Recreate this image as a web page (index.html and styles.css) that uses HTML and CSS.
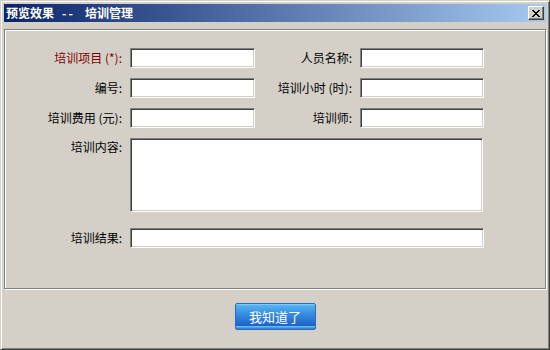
FILE: index.html
```html
<!DOCTYPE html>
<html lang="zh-CN">
<head>
    <meta charset="UTF-8" />
    <title>预览效果 -- 培训管理</title>
    <link rel="stylesheet" href="styles.css">
</head>
<body>

<!-- 弹出窗口 -->
<div class="window">
    <div class="titlebar">
        <span class="title">预览效果<span class="sep">--</span>培训管理</span>
        <span class="close-btn">
            <svg width="8" height="7" viewBox="0 0 8 7" shape-rendering="crispEdges">
                <path d="M0 0h2v1h-2zM6 0h2v1h-2zM1 1h2v1h-2zM5 1h2v1h-2zM2 2h4v1h-4zM3 3h2v1h-2zM2 4h4v1h-4zM1 5h2v1h-2zM5 5h2v1h-2zM0 6h2v1h-2zM6 6h2v1h-2z" fill="#000"/>
            </svg>
        </span>
    </div>

    <!-- 表单区域 -->
    <div class="panel">
        <div class="form">
            <label class="lbl req">培训项目 (*):</label>
            <input type="text" class="field" />
            <label class="lbl">人员名称:</label>
            <input type="text" class="field" />

            <label class="lbl">编号:</label>
            <input type="text" class="field" />
            <label class="lbl">培训小时 (时):</label>
            <input type="text" class="field" />

            <label class="lbl">培训费用 (元):</label>
            <input type="text" class="field" />
            <label class="lbl">培训师:</label>
            <input type="text" class="field" />

            <label class="lbl top">培训内容:</label>
            <textarea class="field wide area"></textarea>

            <label class="lbl result-lbl">培训结果:</label>
            <input type="text" class="field wide result" />
        </div>
    </div>

    <div class="footer">
        <button class="ok-btn">我知道了</button>
    </div>
</div>

</body>
</html>
```

FILE: styles.css
```css
body {
    margin: 0;
    font-family: "Noto Sans CJK SC", "Liberation Sans", sans-serif;
    font-size: 12px;
    background: #d4d0c8;
}
.window {
    width: 550px;
    height: 350px;
    box-sizing: border-box;
    padding: 3px;
    background: #d4d0c8;
    border: 1px solid;
    border-color: #d4d0c8 #404040 #404040 #d4d0c8;
    box-shadow: inset 1px 1px 0 #fff, inset -1px -1px 0 #808080;
}
.titlebar {
    height: 18px;
    display: flex;
    align-items: center;
    justify-content: space-between;
    padding: 0 2px 0 2px;
    margin-bottom: 7px;
    background: linear-gradient(to right, #0a246a, #a6caf0);
}
.title {
    color: #fff;
    font-weight: bold;
    font-size: 12px;
    line-height: 18px;
}
.sep {
    display: inline-block;
    margin: 0 10px 0 8px;
    letter-spacing: 2px;
}
.close-btn {
    width: 16px;
    height: 14px;
    box-sizing: border-box;
    display: flex;
    align-items: center;
    justify-content: center;
    background: #d4d0c8;
    border: 1px solid;
    border-color: #fff #404040 #404040 #fff;
    box-shadow: inset -1px -1px 0 #808080;
}
.panel {
    height: 260px;
    box-sizing: border-box;
    border: 1px solid #808080;
    box-shadow: 1px 1px 0 #fff, inset 1px 1px 0 #fff;
    padding: 18px 0 0 11px;
}
.form {
    display: grid;
    grid-template-columns: 106px 125px 89px 124px;
    column-gap: 8px;
    row-gap: 10px;
}
.lbl {
    align-self: center;
    text-align: right;
    line-height: 16px;
    color: #000;
    white-space: nowrap;
}
.lbl.req {
    color: #800000;
}
.lbl.top {
    align-self: start;
    padding-top: 1px;
}
.field {
    height: 20px;
    box-sizing: border-box;
    margin: 0;
    padding: 2px 3px;
    background: #fff;
    border: 1px solid;
    border-color: #808080 #fff #fff #808080;
    box-shadow: inset 1px 1px 0 #404040, inset -1px -1px 0 #d4d0c8;
    font-family: inherit;
    font-size: 12px;
    outline: none;
}
.wide {
    grid-column: 2 / 5;
}
.area {
    height: 74px;
    resize: none;
    width: 353px;
}
.result-lbl, .result {
    margin-top: 6px;
}
.footer {
    display: flex;
    justify-content: center;
    padding-top: 14px;
}
.ok-btn {
    width: 81px;
    height: 27px;
    padding: 0;
    border: 1px solid #2a6cc0;
    border-radius: 2px;
    color: #fff;
    font-family: inherit;
    font-size: 13px;
    background: linear-gradient(#5cb8f2 0%, #3a92e2 35%, #2672d4 70%, #1e62c6 86%, #62bdf4 90%, #2a72cc 100%);
    box-shadow: inset 0 1px 0 #7ccaf8;
    cursor: pointer;
}
```
